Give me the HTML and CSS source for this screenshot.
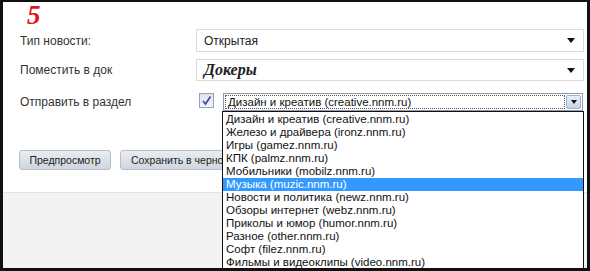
FILE: index.html
```html
<!DOCTYPE html>
<html lang="ru">
<head>
  <meta charset="UTF-8">
  <title>Добавить новость</title>
  <link rel="stylesheet" href="styles.css">
</head>
<body>
  <div class="frame">
    <div class="panel">
      <div class="num">5</div>
      <div class="rows">
        <label class="lbl r1">Тип новости:</label>
        <div class="sel r1">
          <span>Открытая</span>
          <i class="tri"></i>
        </div>
        <label class="lbl r2">Поместить в док</label>
        <div class="sel r2 dock">
          <span>Докеры</span>
          <i class="tri"></i>
        </div>
        <label class="lbl r3">Отправить в раздел</label>
        <div class="field r3">
          <span class="check">
            <svg width="11" height="11" viewBox="0 0 11 11"><path d="M2 6 L4.5 9 L9.5 1.5" fill="none" stroke="#3d4fa8" stroke-width="1.8"/></svg>
          </span>
          <div class="native">
            <div class="focus">Дизайн и креатив (creative.nnm.ru)</div>
            <div class="btn-arrow"><i class="tri small"></i></div>
            <ul class="list">
              <li>Дизайн и креатив (creative.nnm.ru)</li>
              <li>Железо и драйвера (ironz.nnm.ru)</li>
              <li>Игры (gamez.nnm.ru)</li>
              <li>КПК (palmz.nnm.ru)</li>
              <li>Мобильники (mobilz.nnm.ru)</li>
              <li class="active">Музыка (muzic.nnm.ru)</li>
              <li>Новости и политика (newz.nnm.ru)</li>
              <li>Обзоры интернет (webz.nnm.ru)</li>
              <li>Приколы и юмор (humor.nnm.ru)</li>
              <li>Разное (other.nnm.ru)</li>
              <li>Софт (filez.nnm.ru)</li>
              <li>Фильмы и видеоклипы (video.nnm.ru)</li>
            </ul>
          </div>
        </div>
      </div>
      <div class="buttons">
        <button>Предпросмотр</button>
        <button class="wide"><span>Сохранить в черновики</span></button>
      </div>
    </div>
    <div class="footer"></div>
  </div>
</body>
</html>
```

FILE: styles.css
```css
* { margin: 0; padding: 0; box-sizing: border-box; }
body {
  background: #fff;
  font-family: Tahoma, "Liberation Sans", Arial, sans-serif;
}
.frame {
  width: 590px;
  height: 271px;
  border: 3px solid #111;
  border-top-width: 2px;
  background: #fff;
  overflow: hidden;
  display: flex;
  flex-direction: column;
}
.panel {
  height: 190px;
  padding: 0 0 0 16px;
}
.num {
  font-family: "Liberation Serif", serif;
  font-weight: bold;
  font-style: italic;
  font-size: 27px;
  line-height: 27px;
  color: #e3141a;
  margin-left: 8px;
  height: 27px;
}
.rows {
  display: grid;
  grid-template-columns: 177px 1fr;
  align-items: center;
}
.lbl {
  font-size: 12px;
  color: #333;
  padding-left: 1px;
}
.r1 { margin-top: 0; }
.r2 { margin-top: 7px; }
.r3 { margin-top: 12px; }
.sel {
  height: 23px;
  margin-right: 3px;
  border: 1px solid #dcdcdc;
  display: flex;
  align-items: center;
  justify-content: space-between;
  padding: 0 8px 0 7px;
  font-size: 12px;
  color: #222;
}
.sel.r2 { height: 22px; }
.dock span {
  font-family: "Liberation Serif", serif;
  font-weight: bold;
  font-style: italic;
  font-size: 16px;
}
.tri {
  display: block;
  width: 0;
  height: 0;
  border-left: 4px solid transparent;
  border-right: 4px solid transparent;
  border-top: 5px solid #111;
}
.tri.small {
  border-left-width: 3.5px;
  border-right-width: 3.5px;
  border-top-width: 4px;
}
.field {
  display: flex;
  align-items: center;
  height: 18px;
}
.check {
  width: 15px;
  height: 15px;
  margin-left: 3px;
  margin-top: -3px;
  border: 1px solid #9aa0b8;
  background: linear-gradient(#dfe2ee, #f4f5fa);
  display: flex;
  align-items: center;
  justify-content: center;
}
.native {
  position: relative;
  margin-left: 9px;
  width: 360px;
  height: 18px;
  border: 1px solid #8d9cb0;
  display: flex;
  align-items: center;
  padding: 1px;
}
.focus {
  flex: 1;
  height: 14px;
  border: 1px dotted #555;
  font-size: 11.5px;
  line-height: 12px;
  padding-left: 2px;
  color: #111;
}
.btn-arrow {
  width: 15px;
  height: 14px;
  margin-left: 1px;
  border: 1px solid #9fb3cc;
  border-radius: 2px;
  background: linear-gradient(#e8f0fb, #c3d4ea);
  display: flex;
  align-items: center;
  justify-content: center;
}
.list {
  position: absolute;
  top: 17px;
  left: -2px;
  right: -2px;
  list-style: none;
  background: #fff;
  border: 1px solid #111;
  padding-top: 1px;
  z-index: 5;
}
.list li {
  font-size: 11.5px;
  line-height: 13px;
  height: 13px;
  padding-left: 3px;
  color: #111;
  white-space: nowrap;
}
.list li.active {
  background: #3399ff;
  color: #fff;
}
.buttons {
  display: flex;
  gap: 9px;
  margin-top: 39px;
}
button {
  height: 20px;
  width: 92px;
  border: 1px solid #b7bec7;
  border-radius: 3px;
  background: linear-gradient(#e9edf1, #cfd6de);
  font-family: inherit;
  font-size: 10.5px;
  color: #222;
}
button.wide {
  width: 104px;
  text-align: left;
  padding-left: 10px;
  overflow: hidden;
  white-space: nowrap;
}
.footer {
  flex: 1;
  background: #f3f3f3;
  border-top: 1px solid #e4e4e4;
}
```
